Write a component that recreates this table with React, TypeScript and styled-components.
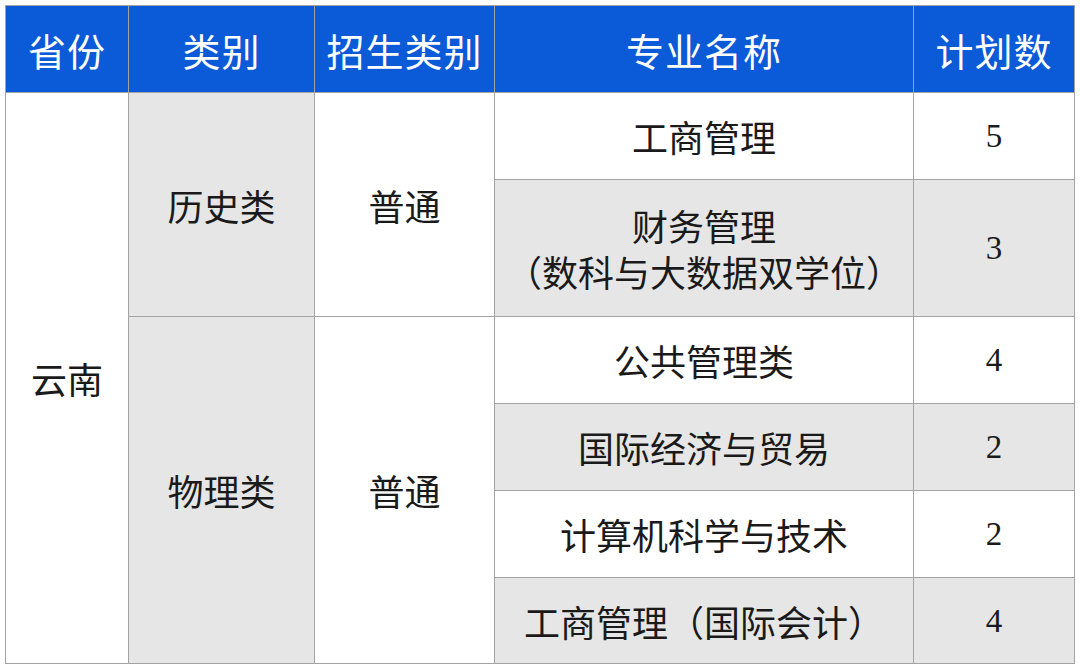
import styled, { createGlobalStyle } from 'styled-components';

const GlobalStyle = createGlobalStyle`
  html, body {
    margin: 0;
    padding: 0;
    background: #fff;
  }
  body {
    padding: 5px;
    font-family: "Noto Sans CJK SC", "Noto Sans", sans-serif;
  }
`

const Table = styled.table`
  border-collapse: collapse;
  table-layout: fixed;
  width: 1069px;
  th, td {
    border: 1px solid #a3a3a3;
    text-align: center;
    vertical-align: middle;
    padding: 0;
  }
`

const HeadCell = styled.th<{ w: number }>`
  width: ${p => p.w}px;
  height: 86px;
  background: #0b5ad8;
  color: #fff;
  font-size: 38px;
  font-weight: 400;
  letter-spacing: 1px;
`

const Cell = styled.td<{ gray?: boolean; h?: number }>`
  background: ${p => (p.gray ? '#e6e6e6' : '#fff')};
  height: ${p => (p.h ? p.h + 'px' : 'auto')};
  color: #1a1a1a;
  font-size: 36px;
  line-height: 46px;
  font-weight: 400;
`

const Num = styled(Cell)`
  font-family: "Liberation Serif", serif;
  font-size: 33px;
  padding-top: 3px;
`

interface Major {
  name: string[]
  count: number
  h: number
}

const history: Major[] = [
  { name: ['工商管理'], count: 5, h: 86 },
  { name: ['财务管理', '（数科与大数据双学位）'], count: 3, h: 136 },
]

const physics: Major[] = [
  { name: ['公共管理类'], count: 4, h: 86 },
  { name: ['国际经济与贸易'], count: 2, h: 86 },
  { name: ['计算机科学与技术'], count: 2, h: 86 },
  { name: ['工商管理（国际会计）'], count: 4, h: 85 },
]

export default function App() {
  const all = [...history, ...physics]
  return (
    <>
      <GlobalStyle />
      <Table>
        <thead>
          <tr>
            <HeadCell w={122}>省份</HeadCell>
            <HeadCell w={185}>类别</HeadCell>
            <HeadCell w={179}>招生类别</HeadCell>
            <HeadCell w={418}>专业名称</HeadCell>
            <HeadCell w={160}>计划数</HeadCell>
          </tr>
        </thead>
        <tbody>
          {all.map((m, i) => {
            const gray = i === 1 || i === 3 || i === 5
            return (
              <tr key={i}>
                {i === 0 && <Cell rowSpan={6}>云南</Cell>}
                {i === 0 && <Cell rowSpan={2} gray>历史类</Cell>}
                {i === 0 && <Cell rowSpan={2}>普通</Cell>}
                {i === 2 && <Cell rowSpan={4} gray>物理类</Cell>}
                {i === 2 && <Cell rowSpan={4}>普通</Cell>}
                <Cell gray={gray} h={m.h}>
                  {m.name.map((line, j) => (
                    <div key={j}>{line}</div>
                  ))}
                </Cell>
                <Num gray={gray}>{m.count}</Num>
              </tr>
            )
          })}
        </tbody>
      </Table>
    </>
  )
}
